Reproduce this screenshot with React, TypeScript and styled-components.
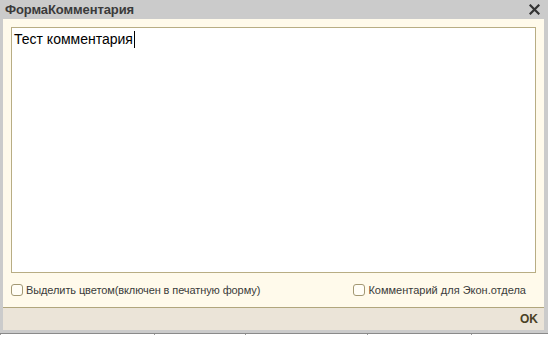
import React from "react";
import styled, { createGlobalStyle } from "styled-components";

const Global = createGlobalStyle`
  html, body { margin: 0; padding: 0; background: #ffffff; }
  body { font-family: "Liberation Sans", Arial, sans-serif; }
`;

const Screen = styled.div`
  width: 548px;
  height: 338px;
  display: flex;
  flex-direction: column;
  overflow: hidden;
`;

const Window = styled.div`
  height: 333px;
  background: #cbcbcb;
  display: flex;
  flex-direction: column;
  padding: 0 4px 3px 3px;
  box-sizing: border-box;
`;

const TitleBar = styled.div`
  height: 20px;
  display: flex;
  align-items: center;
  justify-content: space-between;
  padding: 0 4px 0 2px;
`;

const Title = styled.span`
  font-size: 13px;
  font-weight: bold;
  color: #3a3a3a;
  letter-spacing: -0.1px;
`;

const CloseBtn = styled.button`
  border: 0;
  padding: 0;
  background: transparent;
  width: 12px;
  height: 12px;
  display: flex;
  align-items: center;
  justify-content: center;
`;

const Body = styled.div`
  flex: 1;
  background: #fffaeb;
  display: flex;
  flex-direction: column;
  padding: 8px 8px 0 8px;
`;

const Editor = styled.div`
  height: 246px;
  border: 1px solid #b8ad84;
  background: #ffffff;
  box-sizing: border-box;
  padding: 3px 0 0 2px;
  font-size: 14px;
  color: #000;
  line-height: 17px;
`;

const Caret = styled.span`
  display: inline-block;
  width: 0;
  height: 17px;
  border-left: 1px solid #000;
  vertical-align: top;
  margin-left: 1px;
`;

const CheckRow = styled.div`
  display: flex;
  justify-content: space-between;
  align-items: center;
  height: 34px;
  padding: 0 10px 0 0;
`;

const CheckLabel = styled.label<{ $tight?: boolean }>`
  display: flex;
  align-items: center;
  gap: 3px;
  font-size: 11px;
  color: #3a3a3a;
  letter-spacing: ${(p) => (p.$tight ? "-0.1px" : "0")};
`;

const Box = styled.span`
  width: 12px;
  height: 12px;
  box-sizing: border-box;
  border: 1px solid #a39873;
  border-radius: 3px;
  background: #fffdf6;
`;

const Footer = styled.div`
  height: 25px;
  box-sizing: border-box;
  border-top: 1px solid #b1a67d;
  background: #ebe4d8;
  display: flex;
  align-items: center;
  justify-content: flex-end;
  padding-right: 6px;
`;

const OkButton = styled.button`
  border: 0;
  background: transparent;
  padding: 0;
  font-family: "Liberation Sans", Arial, sans-serif;
  font-size: 12px;
  font-weight: bold;
  color: #4a4024;
`;

const Strip = styled.div`
  flex: 1;
  border-top: 1px solid #8a8a8a;
  display: flex;
  background: #ffffff;
`;

const StripCell = styled.div<{ $w: number }>`
  width: ${(p) => p.$w}px;
  border-left: 1px solid #9a9a9a;
  height: 1px;
`;

export default function App() {
  return (
    <Screen>
      <Global />
      <Window>
        <TitleBar>
          <Title>ФормаКомментария</Title>
          <CloseBtn aria-label="Закрыть">
            <svg width="11" height="11" viewBox="0 0 11 11">
              <path d="M1.5 1.5 L9.5 9.5 M9.5 1.5 L1.5 9.5" stroke="#333" strokeWidth="2.2" strokeLinecap="square" />
            </svg>
          </CloseBtn>
        </TitleBar>
        <Body>
          <Editor>
            Тест комментария<Caret />
          </Editor>
          <CheckRow>
            <CheckLabel $tight>
              <Box />
              Выделить цветом(включен в печатную форму)
            </CheckLabel>
            <CheckLabel>
              <Box />
              Комментарий для Экон.отдела
            </CheckLabel>
          </CheckRow>
        </Body>
        <Footer>
          <OkButton>OK</OkButton>
        </Footer>
      </Window>
      <Strip>
        <StripCell $w={154} />
        <StripCell $w={91} />
        <StripCell $w={122} />
        <StripCell $w={103} />
        <StripCell $w={77} />
      </Strip>
    </Screen>
  );
}
